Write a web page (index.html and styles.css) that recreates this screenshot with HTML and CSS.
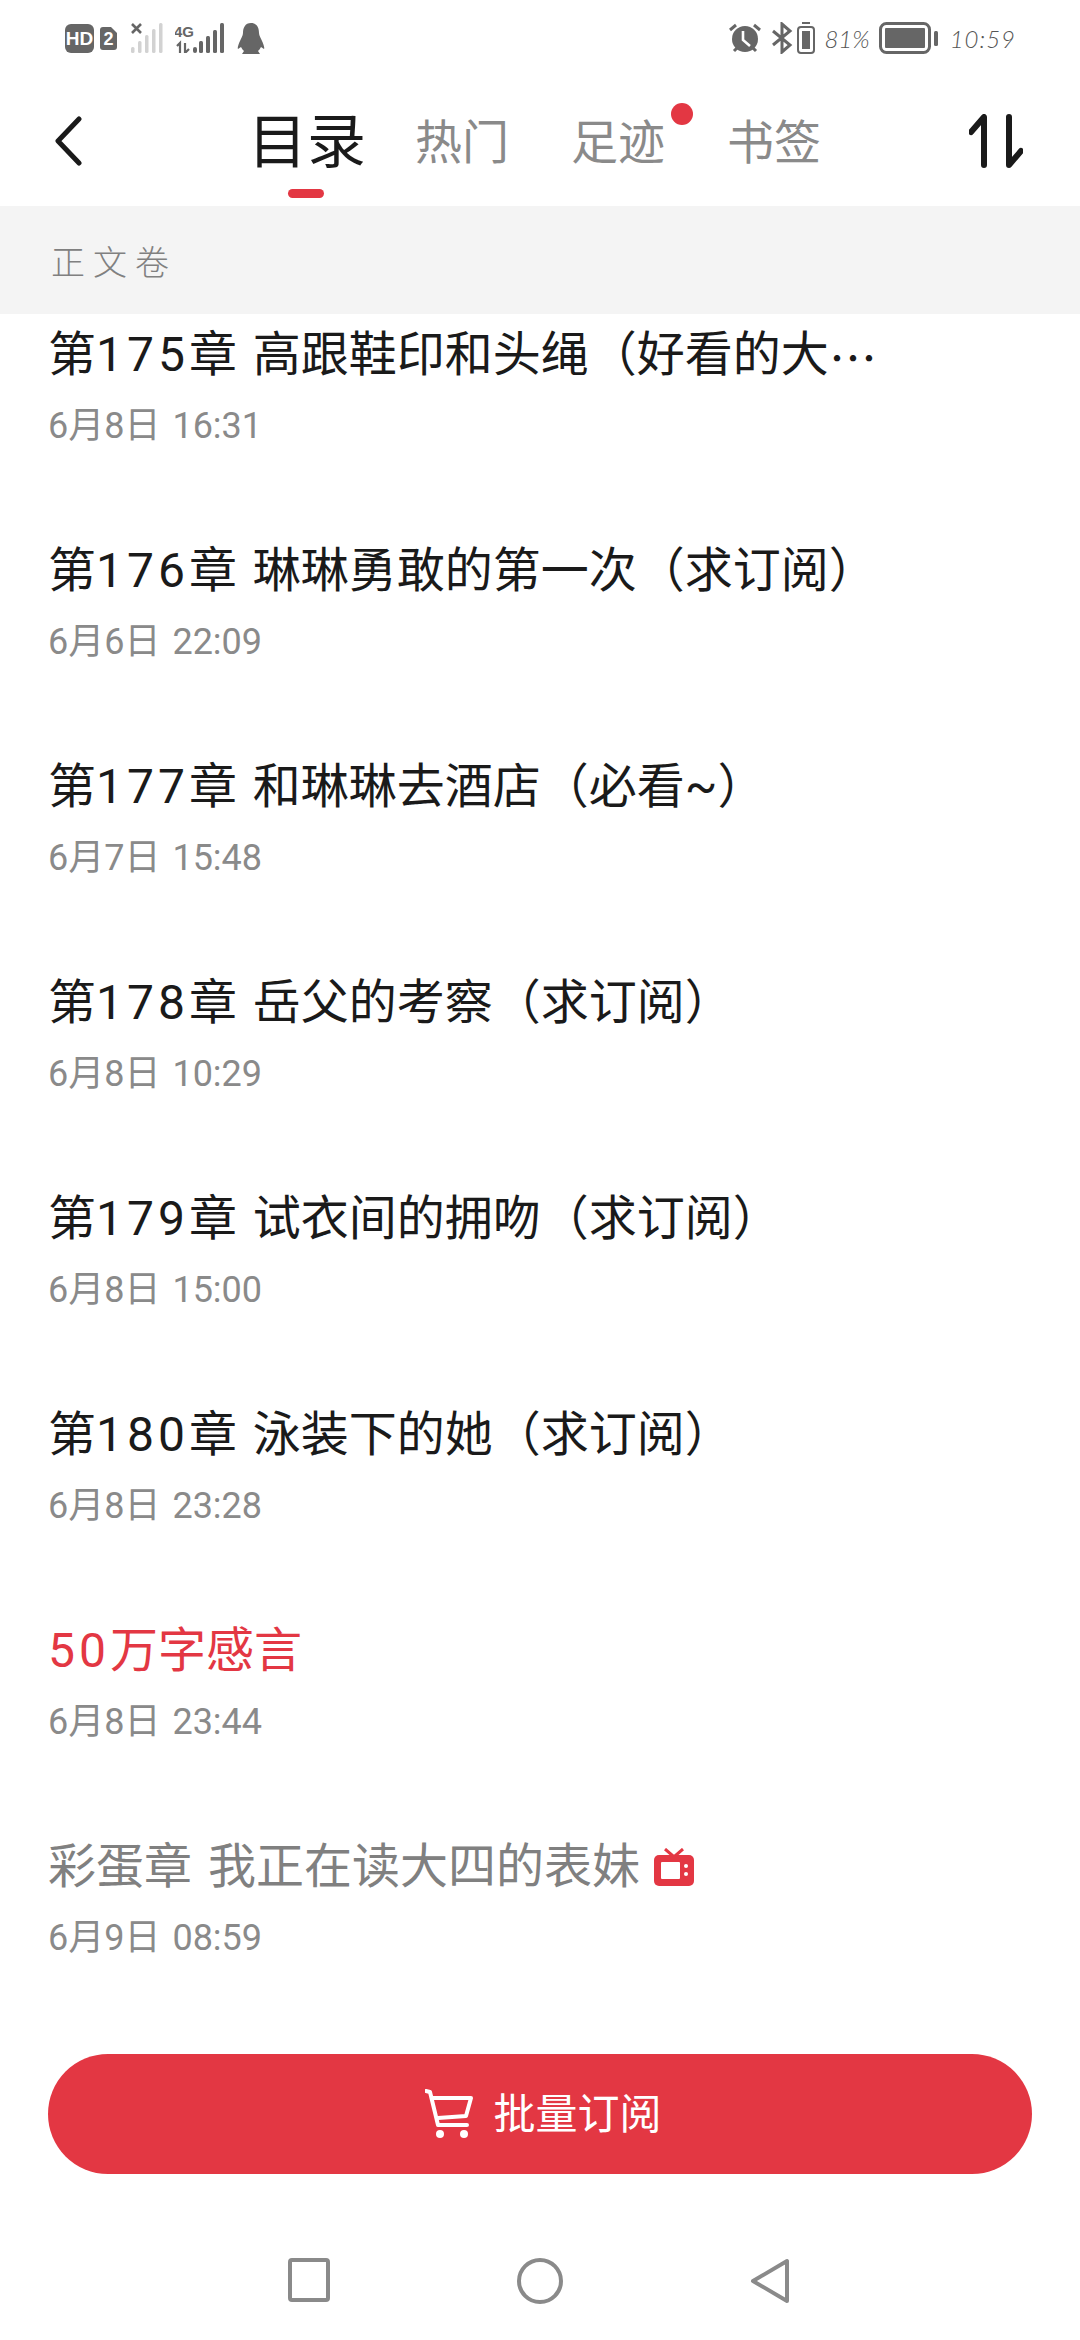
FILE: index.html

```html
<!DOCTYPE html>
<html lang="zh-CN">
<head>
  <meta charset="UTF-8" />
  <title>目录</title>
  <link rel="stylesheet" href="styles.css">
</head>
<body>
  <div class="status">
    <div class="status-group">
      <svg class="ic" width="29" height="29" viewBox="0 0 29 29"><rect width="29" height="29" rx="6" fill="#666"/><text x="14.5" y="21" class="ic-text" font-size="19">HD</text></svg>
      <svg class="ic ml6" width="17" height="23" viewBox="0 0 17 23"><path d="M3 0h8l6 6v14a3 3 0 0 1-3 3H3a3 3 0 0 1-3-3V3a3 3 0 0 1 3-3z" fill="#666"/><text x="8.5" y="18" class="ic-text" font-size="18">2</text></svg>
      <svg class="ic ml14" width="32" height="30" viewBox="0 0 32 30">
        <path d="M1 1l9 9M10 1l-9 9" stroke="#666" stroke-width="2.6"/>
        <g fill="#d2d2d2"><rect x="0" y="24" width="3.5" height="6" rx="1.5"/><rect x="7" y="18" width="3.5" height="12" rx="1.5"/><rect x="14" y="12" width="3.5" height="18" rx="1.5"/><rect x="21" y="6" width="3.5" height="24" rx="1.5"/><rect x="28" y="0" width="3.5" height="30" rx="1.5"/></g>
      </svg>
      <svg class="ic ml12" width="49" height="30" viewBox="0 0 49 30">
        <text x="9" y="14" class="ic-text ic-dark" font-size="15">4G</text>
        <path d="M5 30V20l-3 3M10 20v10l4-4" fill="none" stroke="#666" stroke-width="2.2"/>
        <g fill="#666"><rect x="18" y="24" width="4" height="6" rx="2"/><rect x="24" y="18" width="4" height="12" rx="1.5"/><rect x="31" y="13" width="4" height="17" rx="1.5"/><rect x="38" y="7" width="4" height="23" rx="1.5"/><rect x="45" y="0" width="4" height="30" rx="1.5"/></g>
      </svg>
      <svg class="ic ml13" width="28" height="31" viewBox="0 0 28 31"><path d="M14 0c6 0 8 5 8 10 0 3 2 5 3 8 1 2 3 7 2 8l-3-2c-1 2-2 3-3 4l2 3H5l2-3c-1-1-2-2-3-4l-3 2c-1-1 1-6 2-8 1-3 3-5 3-8C6 5 8 0 14 0z" fill="#666"/></svg>
    </div>
    <div class="status-group">
      <svg class="ic" width="32" height="31" viewBox="0 0 32 31"><circle cx="16" cy="16" r="13" fill="#666"/><path d="M1 7l6-5M31 7l-6-5M5 28l3-3M27 28l-3-3" stroke="#666" stroke-width="3" fill="none"/><path d="M14 8v9l7 6" stroke="#fff" stroke-width="2.6" fill="none"/></svg>
      <svg class="ic ml11" width="21" height="32" viewBox="0 0 21 32"><path d="M1 9l17 14-8 7V2l8 7L1 23" fill="none" stroke="#666" stroke-width="3"/></svg>
      <svg class="ic ml4" width="18" height="32" viewBox="0 0 18 32"><rect x="5" y="0" width="8" height="2" fill="#666"/><rect x="1" y="5" width="16" height="26" rx="3" fill="none" stroke="#666" stroke-width="2"/><rect x="5" y="9" width="8" height="18" fill="#666"/></svg>
      <span class="status-text pct">81%</span>
      <svg class="ic batt" width="60" height="32" viewBox="0 0 60 32"><rect x="1.5" y="1.5" width="49" height="29" rx="6" fill="none" stroke="#666" stroke-width="3"/><rect x="6" y="6" width="40" height="20" rx="1" fill="#666"/><rect x="55" y="9" width="4" height="15" rx="1.5" fill="#666"/></svg>
      <span class="status-text clock">10:59</span>
    </div>
  </div>

  <header class="nav">
    <svg class="back" width="28" height="50" viewBox="0 0 28 50"><path d="M25 3L4 25l21 22" fill="none" stroke="#1a1a1a" stroke-width="5" stroke-linecap="round" stroke-linejoin="round"/></svg>
    <nav class="tabs">
      <a class="tab active">目录</a>
      <a class="tab">热门</a>
      <a class="tab">足迹<i class="dot"></i></a>
      <a class="tab">书签</a>
    </nav>
    <svg class="sort" width="54" height="54" viewBox="0 0 54 54"><path d="M2 18L15 3v48M40 3v48l12-14" fill="none" stroke="#1a1a1a" stroke-width="6" stroke-linecap="round" stroke-linejoin="round"/></svg>
  </header>

  <div class="volume">正文卷</div>

  <main class="chapters">
    <div class="chapter">
      <div class="chapter-title">第<span class="num">175</span>章 高跟鞋印和头绳（好看的大<span class="more">…</span></div>
      <div class="chapter-date">6月8日 16:31</div>
    </div>
    <div class="chapter">
      <div class="chapter-title">第<span class="num">176</span>章 琳琳勇敢的第一次（求订阅）</div>
      <div class="chapter-date">6月6日 22:09</div>
    </div>
    <div class="chapter">
      <div class="chapter-title">第<span class="num">177</span>章 和琳琳去酒店（必看~）</div>
      <div class="chapter-date">6月7日 15:48</div>
    </div>
    <div class="chapter">
      <div class="chapter-title">第<span class="num">178</span>章 岳父的考察（求订阅）</div>
      <div class="chapter-date">6月8日 10:29</div>
    </div>
    <div class="chapter">
      <div class="chapter-title">第<span class="num">179</span>章 试衣间的拥吻（求订阅）</div>
      <div class="chapter-date">6月8日 15:00</div>
    </div>
    <div class="chapter">
      <div class="chapter-title">第<span class="num">180</span>章 泳装下的她（求订阅）</div>
      <div class="chapter-date">6月8日 23:28</div>
    </div>
    <div class="chapter">
      <div class="chapter-title red"><span class="num">50</span>万字感言</div>
      <div class="chapter-date">6月8日 23:44</div>
    </div>
    <div class="chapter">
      <div class="chapter-title gray">彩蛋章 我正在读大四的表妹<svg class="tv" width="40" height="38" viewBox="0 0 40 38"><path d="M11 1l8 7h2l8-7" fill="none" stroke="#e33743" stroke-width="3"/><rect y="7" width="40" height="31" rx="5" fill="#e33743"/><rect x="7" y="14" width="19" height="17" rx="1" fill="#fff"/><circle cx="32" cy="18" r="2" fill="#fff"/><circle cx="32" cy="26" r="2" fill="#fff"/></svg></div>
      <div class="chapter-date">6月9日 08:59</div>
    </div>
  </main>

  <button class="buy">
    <svg width="48" height="50" viewBox="0 0 48 50"><path d="M1 2l4 1 8 33h29M8 9h38l-5 18-28 2" fill="none" stroke="#fff" stroke-width="4" stroke-linecap="round" stroke-linejoin="round"/><circle cx="15" cy="45" r="4" fill="#fff"/><circle cx="39" cy="45" r="4" fill="#fff"/></svg>
    <span class="buy-label">批量订阅</span>
  </button>

  <div class="sysnav">
    <svg width="42" height="44" viewBox="0 0 42 44"><rect x="2" y="2" width="38" height="40" rx="2" fill="none" stroke="#8a8a8a" stroke-width="4"/></svg>
    <svg width="46" height="46" viewBox="0 0 46 46"><circle cx="23" cy="23" r="21" fill="none" stroke="#8a8a8a" stroke-width="4"/></svg>
    <svg width="40" height="46" viewBox="0 0 40 46"><path d="M37 3v40L3 23z" fill="none" stroke="#8a8a8a" stroke-width="4" stroke-linejoin="round"/></svg>
  </div>
</body>
</html>
```

FILE: styles.css

```css
html, body {
  margin: 0;
  height: 2340px;
}
body {
  display: flex;
  flex-direction: column;
  background-color: #fff;
  color: #1a1a1a;
  font-family: Roboto, "Noto Sans CJK SC", sans-serif;
  overflow: hidden;
}
.status {
  height: 60px;
  padding: 22px 64px 0 65px;
  box-sizing: border-box;
  display: flex;
  justify-content: space-between;
  align-items: flex-start;
}
.status-group {
  display: flex;
  align-items: center;
  height: 32px;
}
.status-text {
  font-family: Lato, sans-serif;
  font-style: italic;
  font-weight: 300;
  font-size: 24px;
  color: #555;
}
.pct { margin-left: 9px; }
.batt { margin-left: 9px; }
.clock { margin-left: 11px; letter-spacing: 1px; }
.ic { display: block; }
.ic-text {
  font-family: "Liberation Sans", sans-serif;
  font-weight: bold;
  fill: #fff;
  text-anchor: middle;
}
.ic-dark { fill: #666; }
.ml4 { margin-left: 4px; }
.ml6 { margin-left: 6px; }
.ml11 { margin-left: 11px; }
.ml12 { margin-left: 12px; }
.ml13 { margin-left: 13px; }
.ml14 { margin-left: 14px; }

.nav {
  height: 146px;
  padding: 0 57px 0 54px;
  display: flex;
  align-items: flex-start;
}
.back { margin-top: 56px; }
.sort { margin-left: auto; margin-top: 54px; }
.tabs {
  display: flex;
  gap: 62px;
  margin-left: 166px;
  margin-top: 48px;
}
.tab {
  position: relative;
  font-size: 47px;
  line-height: 70px;
  color: #8a8a8a;
}
.tab.active {
  font-size: 59px;
  color: #1a1a1a;
  margin-right: -13px;
}
.tab.active::after {
  content: "";
  position: absolute;
  left: 40px;
  top: 81px;
  width: 36px;
  height: 9px;
  border-radius: 5px;
  background-color: #e33743;
}
.dot {
  position: absolute;
  right: -28px;
  top: -5px;
  width: 22px;
  height: 22px;
  border-radius: 50%;
  background-color: #e33743;
}

.volume {
  height: 108px;
  line-height: 114px;
  padding-left: 51px;
  background-color: #f4f4f4;
  color: #808080;
  font-size: 34px;
  font-weight: 300;
  letter-spacing: 8px;
}

.chapters {
  flex: 1;
  padding: 11px 48px 0;
  min-height: 0;
}
.chapter { height: 216px; }
.chapter-title {
  display: flex;
  align-items: center;
  font-size: 48px;
  line-height: 60px;
  white-space: pre;
  word-spacing: 4px;
}
.num { letter-spacing: 4px; }
.more { font-family: "Noto Sans CJK SC", sans-serif; }
.chapter-title.red { color: #e33743; }
.chapter-title.gray { color: #808080; }
.tv { margin-left: 14px; }
.chapter-date {
  margin-top: 19px;
  font-size: 36px;
  line-height: 44px;
  word-spacing: 3px;
  color: #8a8a8a;
}

.buy {
  flex: none;
  margin: 0 48px;
  height: 120px;
  padding: 0 0 0 7px;
  border: none;
  border-radius: 60px;
  background-color: #e33743;
  color: #fff;
  font-family: inherit;
  font-size: 42px;
  display: flex;
  align-items: center;
  justify-content: center;
  gap: 20px;
}
.buy-label { margin-bottom: 8px; }
.sysnav {
  flex: none;
  height: 166px;
  display: flex;
  align-items: flex-start;
  padding: 84px 0 0 288px;
  box-sizing: border-box;
  gap: 187px;
}
```
